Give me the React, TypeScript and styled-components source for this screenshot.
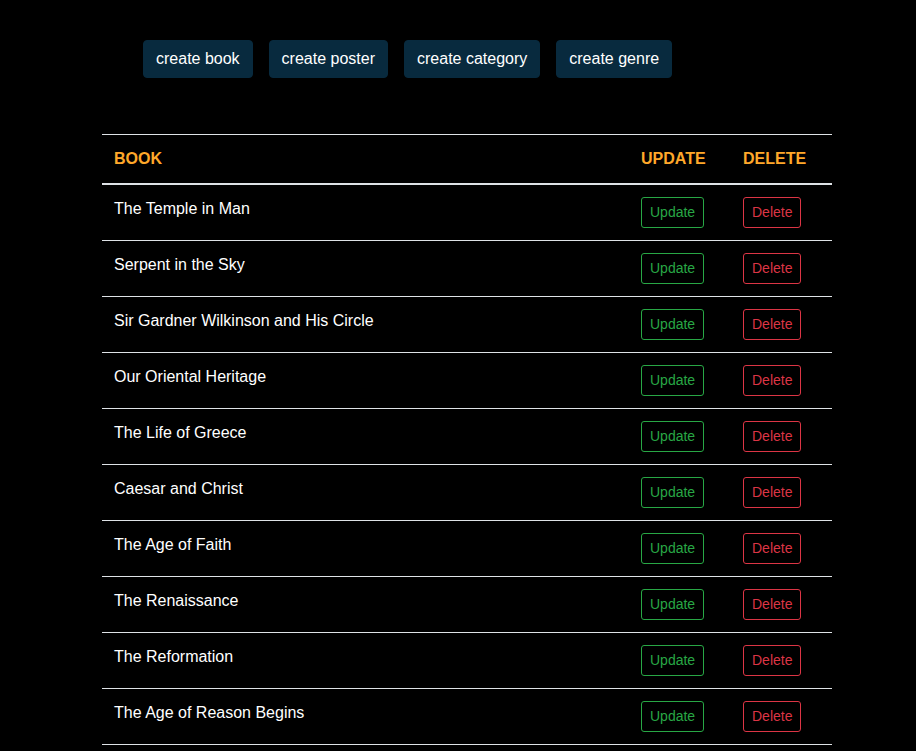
import React from "react";
import styled, { createGlobalStyle } from "styled-components";

const Global = createGlobalStyle`
  html, body { margin: 0; padding: 0; background: #000; }
  body { font-family: "Liberation Sans", Arial, Helvetica, sans-serif; color: #fff; }
  * { box-sizing: border-box; }
`;

const Page = styled.div`
  padding: 40px 0 0 0;
  min-height: 751px;
  background: #000;
`;

const Toolbar = styled.div`
  display: flex;
  gap: 16px;
  margin-left: 143px;
`;

const CreateButton = styled.button`
  font-family: "Liberation Sans", Arial, Helvetica, sans-serif;
  font-size: 16px;
  line-height: 24px;
  padding: 6px 12px;
  border: 1px solid #082a3e;
  border-radius: 4px;
  background: #082a3e;
  color: #fff;
  cursor: pointer;
`;

const Table = styled.table`
  margin: 56px 0 0 102px;
  width: 730px;
  border-collapse: collapse;
`;

const Th = styled.th<{ $w?: number }>`
  text-align: left;
  padding: 12px;
  font-size: 16px;
  line-height: 24px;
  font-weight: 700;
  color: #ffa82a;
  border-top: 1px solid #dee2e6;
  border-bottom: 2px solid #dee2e6;
  vertical-align: bottom;
  width: ${(p) => (p.$w ? `${p.$w}px` : "auto")};
`;

const Td = styled.td`
  padding: 12px;
  font-size: 16px;
  line-height: 24px;
  color: #fff;
  border-top: 1px solid #dee2e6;
  vertical-align: top;
`;

const Tbody = styled.tbody`
  tr:last-child td { border-bottom: 1px solid #dee2e6; }
`;

const OutlineButton = styled.button<{ $color: string }>`
  font-family: "Liberation Sans", Arial, Helvetica, sans-serif;
  font-size: 14px;
  line-height: 21px;
  padding: 4px 8px;
  border: 1px solid ${(p) => p.$color};
  border-radius: 3px;
  background: transparent;
  color: ${(p) => p.$color};
  cursor: pointer;
  display: inline-block;
`;

const books = [
  "The Temple in Man",
  "Serpent in the Sky",
  "Sir Gardner Wilkinson and His Circle",
  "Our Oriental Heritage",
  "The Life of Greece",
  "Caesar and Christ",
  "The Age of Faith",
  "The Renaissance",
  "The Reformation",
  "The Age of Reason Begins",
];

export default function App() {
  return (
    <Page>
      <Global />
      <Toolbar>
        <CreateButton>create book</CreateButton>
        <CreateButton>create poster</CreateButton>
        <CreateButton>create category</CreateButton>
        <CreateButton>create genre</CreateButton>
      </Toolbar>
      <Table>
        <thead>
          <tr>
            <Th>BOOK</Th>
            <Th $w={102}>UPDATE</Th>
            <Th $w={101}>DELETE</Th>
          </tr>
        </thead>
        <Tbody>
          {books.map((b) => (
            <tr key={b}>
              <Td>{b}</Td>
              <Td>
                <OutlineButton $color="#28a745">Update</OutlineButton>
              </Td>
              <Td>
                <OutlineButton $color="#dc3545">Delete</OutlineButton>
              </Td>
            </tr>
          ))}
        </Tbody>
      </Table>
    </Page>
  );
}
